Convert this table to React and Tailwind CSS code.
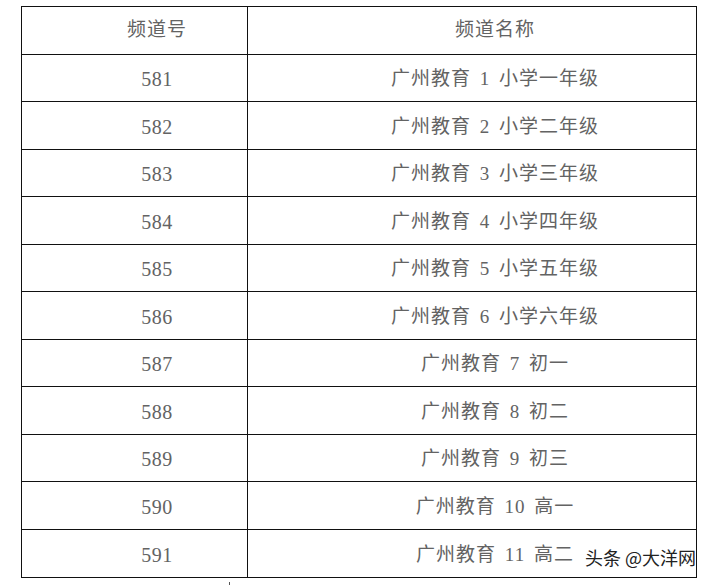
import React from "react";

const rows = [
  ["581", "广州教育 1 小学一年级"],
  ["582", "广州教育 2 小学二年级"],
  ["583", "广州教育 3 小学三年级"],
  ["584", "广州教育 4 小学四年级"],
  ["585", "广州教育 5 小学五年级"],
  ["586", "广州教育 6 小学六年级"],
  ["587", "广州教育 7 初一"],
  ["588", "广州教育 8 初二"],
  ["589", "广州教育 9 初三"],
  ["590", "广州教育 10 高一"],
  ["591", "广州教育 11 高二"],
];

function Row({ a, b, last, header }) {
  return (
    <div className={"flex h-[47.5px] " + (last ? "" : "border-b border-[#111]")}>
      <div className="w-[226px] border-r border-[#111] flex items-center justify-center pl-[45px]">
        <span className={header ? "pt-0" : "pt-[3px] text-[20px] tracking-[0.5px]"}>{a}</span>
      </div>
      <div className="flex-1 flex items-center justify-center pl-[46px]">
        <span className={header ? "pt-0" : "pt-[3px]"}>{b}</span>
      </div>
    </div>
  );
}

export default function App() {
  return (
    <div className="relative w-[713px] h-[587px] bg-white overflow-hidden text-[19px] leading-[20px] tracking-[1px] text-[#636363] [word-spacing:3px] font-['Liberation_Serif','Noto_Sans_CJK_SC',serif]">
      <div className="pt-[6px] pl-[21px]">
        <div className="w-[676px] border border-[#111]">
          <Row a="频道号" b="频道名称" header />
          {rows.map((r, i) => (
            <Row key={r[0]} a={r[0]} b={r[1]} last={i === rows.length - 1} />
          ))}
        </div>
      </div>
      <div className="absolute left-[585px] top-[548px] text-[18px] leading-[18px] tracking-normal text-[#222] [word-spacing:0px] font-['Noto_Sans_CJK_SC',sans-serif]">
        头条 @大洋网
      </div>
      <div className="absolute left-[229px] top-[582px] w-[1px] h-[3px] bg-[#555]" />
    </div>
  );
}
